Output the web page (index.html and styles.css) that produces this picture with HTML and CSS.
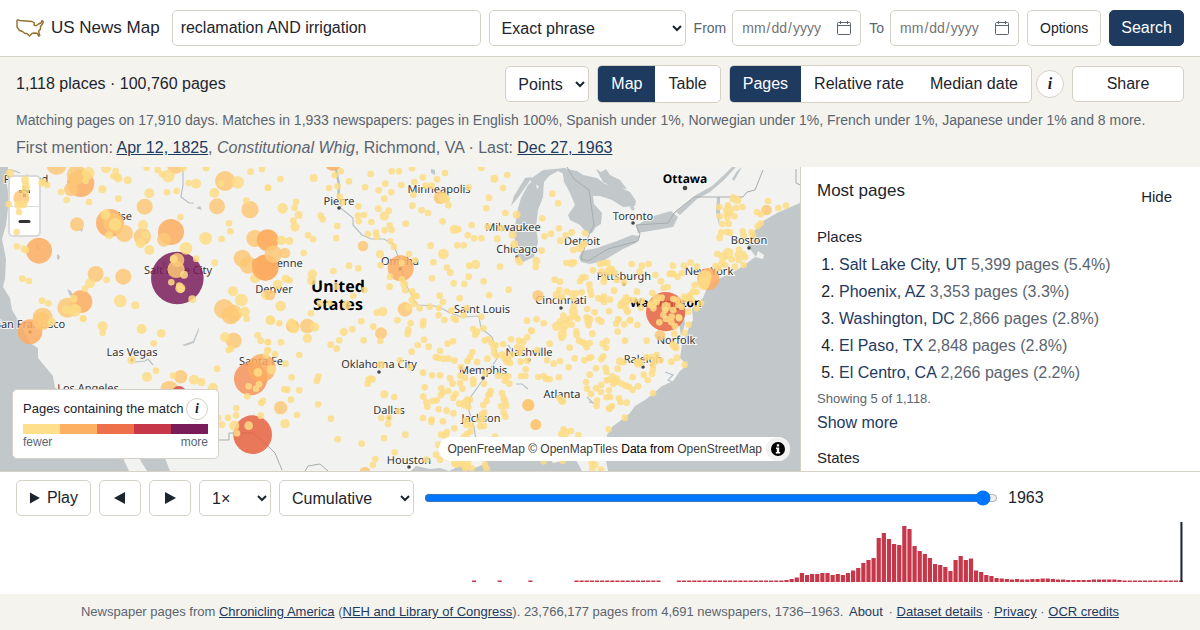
FILE: index.html
```html
<!DOCTYPE html>
<html lang="en">
<head>
<meta charset="utf-8">
<meta name="viewport" content="width=device-width, initial-scale=1">
<title>US News Map</title>
<link rel="stylesheet" href="styles.css">
</head>
<body>
<header class="topbar">
  <a class="brand" href="#">
    <svg class="brand-mark" viewBox="0 0 28 18" aria-hidden="true"><path d="M1 1.500 1.700.8 4 1.500 16 2.500 18.500 4 18 6 20 6.800 22.500 5 25 4 26 1.500 27.300 2.500 26.500 5 24.500 7.500 24.500 10 22.500 12.500 23.800 16.500 22.800 17 21 14.200 18 14 16 14.500 13.500 17 11 14.500 9 14.500 6.500 12.500 3.500 11.500 1 8Z" fill="none" stroke="#92702f" stroke-width="1.400" stroke-linejoin="round"/></svg>
    <span>US News Map</span>
  </a>
  <input class="field query" type="text" value="reclamation AND irrigation" aria-label="Search terms">
  <select class="field mode" aria-label="Match type"><option>Exact phrase</option></select>
  <label class="date-label">From <input class="field date" type="date"></label>
  <label class="date-label">To <input class="field date" type="date"></label>
  <button class="btn options" type="button">Options</button>
  <button class="btn primary" type="submit">Search</button>
</header>

<section class="summary">
  <div class="summary-row">
    <p class="totals">1,118 places · 100,760 pages</p>
    <select class="field points" aria-label="Map style"><option>Points</option></select>
    <div class="segmented">
      <button class="on" type="button">Map</button><button type="button">Table</button>
    </div>
    <div class="measure">
      <div class="segmented">
        <button class="on" type="button">Pages</button><button type="button">Relative rate</button><button type="button">Median date</button>
      </div>
      <button class="info" type="button" aria-label="About measures">i</button>
    </div>
    <button class="btn share" type="button">Share</button>
  </div>
  <p class="detail">Matching pages on 17,910 days. Matches in 1,933 newspapers: pages in English 100%, Spanish under 1%, Norwegian under 1%, French under 1%, Japanese under 1% and 8 more.</p>
  <p class="mentions">First mention: <a href="#">Apr 12, 1825</a>, <em>Constitutional Whig</em>, Richmond, VA · Last: <a href="#">Dec 27, 1963</a></p>
</section>

<main class="stage">
  <div class="map">
    <svg class="layer" viewBox="0 0 800 304" preserveAspectRatio="xMidYMid slice" role="img" aria-label="Base map of the United States">
      <rect width="800" height="304" fill="#c2c8ca"/>
      <path fill="#f2f3f1" d="M8 0 7 18 9 32 6 58 2 72 6 92 5 112 3 120 10 131 12 143 18 153 30 176 38 181 38 191 53 209 55 221 90 232 110 262 123 291 129 304 147 304 139 291 140 270 150 265 165 291 170 304 411 304 416 299 430 302 440 301 449 304 459 299 470 303 484 297 487 292 500 280 540 280 553 296 562 294 575 291 582 304 608 304 606 294 607 268 613 259 620 254 630 246 635 239 645 233 654 226 662 219 673 214 680 204 687 198 680 191 682 178 690 158 693 153 692 141 703 131 707 121 712 115 737 103 747 96 755 90 763 92 764 88 758 84 756 90 747 78 752 68 760 56 777 46 800 36 800 0Z"/>
      <g fill="#c2c8ca">
        <path d="M525 11 532 10 527 18 517 32 511 39 514 29Z"/>
        <path d="M528 18 535 11 537 22 544 14 543 30 538 43 536 60 538 75 534 90 523 95 516 85 514 65 518 41 521 31Z"/>
        <path d="M529 13 543 3 565 1 575 8 570 10 558 4 549 9 540 20Z"/>
        <path d="M562 1 577 4 583 8 597 11 605 17 617 19 630 25 636 34 635 39 623 40 612 33 600 29 593 29 594 37 602 46 601 57 596 60 592 66 587 66 580 58 570 53 568 48 575 38 570 26 564 15Z"/>
        <path d="M596 2 601 5 606 2 610 8 620 13 627 22 615 21 603 15Z"/>
        <path d="M579 90 582 84 597 81 617 74 632 68 640 69 636 76 623 82 603 94 590 97 581 95Z"/>
        <path d="M636 59 650 50 671 44 678 50 673 60 656 63 638 66Z"/>
        <path d="M676 45 696 28 712 19 724 8 732 0 736 0 723 14 710 25 697 32 680 48Z"/>
        <path d="M717 30 720 30 720 46 719 58 716 45ZM737 4 742 0 734 14 732 12Z"/>
        <path d="M632 37 635 42 632 44 630 40ZM583 75 587 74 586 79ZM431 2 435 3 435 8 431 6Z"/>
        <path d="M678 137 683 141 685 157 681 170 679 155Z"/>
        <path d="M36 76 38 79 40 84 37 82ZM57 87 60 89 59 93 57 92ZM67 122 71 124 73 128 70 129ZM79 62 83 61 82 65ZM196 41 200 39 202 43 198 42ZM162 95 166 94 167 102 163 100ZM182 178 193 174 199 160 199 163 194 176 185 179Z"/>
      </g>
      <g fill="none" stroke="#b6c0c6" stroke-width="1.200">
        <path d="M183 3 183 18 181 30 189 36 194 36M6 3 12 3 20 6"/>
        <path stroke-width="2.500" d="M336 2 339 18 338 34 341 40"/>
        <path d="M339 40 347 46 353 51 353 58 362 68 371 72 384 72 393 77 401 96 404 114 413 131 418 138 435 139 443 142 450 146 462 150 479 149"/>
        <path d="M479 150 481 161 492 170 498 190 489 204 482 214 470 231 469 244 474 260 477 281"/>
        <path d="M508 178 515 186M516 217 522 217 528 222M587 230 593 236 589 235M135 195 145 194 148 192 153 198"/>
        <path d="M665 205 673 208 668 213 672 215"/>
      </g>
      <g fill="none" stroke="#a9abac" stroke-width="1">
        <path d="M567 0 574 12 589 23 594 58 588 70 581 92 588 94 608 82 638 74 640 67 636 58 668 56 675 45 694 30 743 30 747 25 755 23 763 3M796 2 796 16 800 18"/>
        <path d="M218 273 229 273 229 266 253 266 268 279 275 286 282 303M305 304 308 299 320 297 328 304"/>
      </g>
      <g fill="#444"><circle cx="685" cy="21" r="2.300"/><circle cx="633" cy="56" r="1.800"/><circle cx="339" cy="41" r="1.800"/><circle cx="400" cy="102" r="1.800"/><circle cx="517" cy="90" r="1.800"/><circle cx="749" cy="81" r="1.800"/><circle cx="624" cy="117" r="1.800"/><circle cx="561" cy="141" r="1.800"/><circle cx="30" cy="165" r="1.800"/><circle cx="132" cy="193" r="1.800"/><circle cx="379" cy="205" r="1.800"/><circle cx="389" cy="251" r="1.800"/><circle cx="409" cy="300" r="1.800"/><circle cx="483" cy="211" r="1.800"/><circle cx="529" cy="193" r="1.800"/><circle cx="562" cy="234" r="1.800"/><circle cx="643" cy="200" r="1.800"/><circle cx="676" cy="181" r="1.800"/><circle cx="677" cy="142" r="2"/></g>
      <g class="places">
        <text x="26" y="16">Portland</text><text x="118" y="53">Boise</text><text x="178" y="107">Salt Lake City</text>
        <text x="277" y="100">Cheyenne</text><text x="274" y="126">Denver</text><text x="339" y="38">Pierre</text>
        <text x="439" y="26">Minneapolis</text><text x="513" y="64">Milwaukee</text><text x="517" y="86">Chicago</text>
        <text x="582" y="78">Detroit</text><text x="633" y="53">Toronto</text><text x="749" y="77">Boston</text>
        <text x="624" y="113">Pittsburgh</text><text x="709" y="108">New York</text><text x="561" y="137">Cincinnati</text>
        <text x="400" y="98">Omaha</text><text x="482" y="146">Saint Louis</text><text x="30" y="161">San Francisco</text>
        <text x="132" y="189">Las Vegas</text><text x="88" y="225">Los Angeles</text><text x="261" y="198">Santa Fe</text>
        <text x="379" y="201">Oklahoma City</text><text x="389" y="247">Dallas</text><text x="409" y="297">Houston</text>
        <text x="483" y="207">Memphis</text><text x="529" y="189">Nashville</text><text x="481" y="255">Jackson</text>
        <text x="562" y="231">Atlanta</text><text x="643" y="196">Raleigh</text><text x="676" y="177">Norfolk</text>
        <text class="capital" x="685" y="16">Ottawa</text><text class="capital" x="666" y="140">Washington</text>
        <text class="country" x="338" y="125">United</text><text class="country" x="338" y="143">States</text>
      </g>
    </svg>
    <div class="zoom">
      <button type="button" aria-label="Zoom in"><svg viewBox="0 0 29 29" aria-hidden="true"><path d="M14.500 9v11M9 14.500h11" stroke="#333" stroke-width="3"/></svg></button>
      <button type="button" aria-label="Zoom out"><svg viewBox="0 0 29 29" aria-hidden="true"><path d="M10 14.500h9" stroke="#333" stroke-width="3" stroke-linecap="round"/></svg></button>
    </div>
    <svg class="layer dots" id="dots" viewBox="0 0 800 304" preserveAspectRatio="xMidYMid slice" aria-hidden="true"></svg>
    <section class="legend">
      <div class="legend-head"><span>Pages containing the match</span><button class="info small" type="button" aria-label="About the colours">i</button></div>
      <div class="ramp"><i class="c1"></i><i class="c2"></i><i class="c3"></i><i class="c4"></i><i class="c5"></i></div>
      <div class="legend-ends"><span>fewer</span><span>more</span></div>
    </section>
    <div class="credit">
      <span><a href="#">OpenFreeMap</a> <a href="#">© OpenMapTiles</a> Data from <a href="#">OpenStreetMap</a></span>
      <button type="button" aria-label="Toggle attribution"><svg viewBox="0 0 24 24" aria-hidden="true"><circle cx="12" cy="12" r="7"/><path fill="#fff" d="M10.800 7.300h2.400v2.200h-2.400zM10 10.500h3.200v4.500h1v1.500h-4.400v-1.500h1v-3H10z"/></svg></button>
    </div>
  </div>
  <aside class="side">
    <div class="side-head"><h2>Most pages</h2><button class="plain" type="button">Hide</button></div>
    <h3>Places</h3>
    <ol>
      <li><a href="#">Salt Lake City, UT</a> <span>5,399 pages (5.4%)</span></li>
      <li><a href="#">Phoenix, AZ</a> <span>3,353 pages (3.3%)</span></li>
      <li><a href="#">Washington, DC</a> <span>2,866 pages (2.8%)</span></li>
      <li><a href="#">El Paso, TX</a> <span>2,848 pages (2.8%)</span></li>
      <li><a href="#">El Centro, CA</a> <span>2,266 pages (2.2%)</span></li>
    </ol>
    <p class="shown">Showing 5 of 1,118.</p>
    <button class="plain more" type="button">Show more</button>
    <h3>States</h3>
  </aside>
</main>

<section class="timeline">
  <div class="player">
    <button class="btn play" type="button"><svg viewBox="0 0 12 14" aria-hidden="true"><path d="M1 1v12l11-6z"/></svg>Play</button>
    <button class="btn step" type="button" aria-label="Previous year"><svg viewBox="0 0 12 14" aria-hidden="true"><path d="M11 1v12L0 7z"/></svg></button>
    <button class="btn step" type="button" aria-label="Next year"><svg viewBox="0 0 12 14" aria-hidden="true"><path d="M1 1v12l11-6z"/></svg></button>
    <select class="field speed" aria-label="Speed"><option>1×</option></select>
    <select class="field span" aria-label="Time span"><option>Cumulative</option></select>
    <input class="scrub" type="range" min="1736" max="1966" value="1963" aria-label="Year">
    <output class="year">1963</output>
  </div>
  <svg class="histogram" id="histogram" viewBox="0 0 228 60" preserveAspectRatio="none" role="img" aria-label="Matching pages per year"></svg>
</section>

<footer class="foot">Newspaper pages from <a href="#">Chronicling America</a> (<a href="#">NEH and Library of Congress</a>). 23,766,177 pages from 4,691 newspapers, 1736–1963. <button class="about" type="button">About</button> · <a href="#">Dataset details</a> · <a href="#">Privacy</a> · <a href="#">OCR credits</a></footer>
<script src="app.js"></script>
</body>
</html>
```
FILE: styles.css
```css
:root {
  --ink: #1c242d;
  --muted: #5b6570;
  --navy: #1e3a5f;
  --line: #d6d1c6;
  --paper: #f4f3ee;
}
* { box-sizing: border-box; }
body {
  margin: 0;
  height: 100vh;
  display: flex;
  flex-direction: column;
  font: 16px/22px "Liberation Sans", Arial, sans-serif;
  color: var(--ink);
  background: #fff;
}
p, h2, h3, ol { margin: 0; font-weight: 400; }
a { color: var(--navy); }
button, input, select { font: inherit; color: inherit; }
button { cursor: pointer; }

.topbar {
  display: flex;
  align-items: center;
  gap: 8px;
  padding: 10px 16px;
  border-bottom: 1px solid var(--line);
}
.brand {
  display: flex;
  align-items: center;
  gap: 7px;
  margin-right: 4px;
  font-size: 17px;
  color: var(--ink);
  text-decoration: none;
  white-space: nowrap;
}
.brand-mark { width: 28px; height: 18px; }
.field, .btn {
  height: 36px;
  border: 1px solid var(--line);
  border-radius: 5px;
  background: #fff;
}
.field { padding: 0 8px; }
.btn { padding: 0 12px; }
.query { flex: 1; min-width: 0; }
.mode { flex: 0 0 197px; }
.date-label {
  display: flex;
  align-items: center;
  gap: 6px;
  font-size: 14px;
  color: var(--muted);
}
.date { width: 129px; color: #757575; }
.date::-webkit-calendar-picker-indicator {
  width: 16px;
  height: 16px;
  padding: 0;
  background: url("data:image/svg+xml,%3Csvg xmlns='http://www.w3.org/2000/svg' viewBox='0 0 16 16' fill='none' stroke='%235b6570'%3E%3Crect x='1.5' y='2.500' width='13' height='12' rx='1'/%3E%3Cpath d='M1.5 5.500h13M4.500 1v3M11.500 1v3'/%3E%3C/svg%3E") center / 16px 16px no-repeat;
}
.options { font-size: 14px; }
.btn.primary { padding: 0 11px; background: var(--navy); border-color: var(--navy); color: #fff; }

.summary { padding: 8px 16px; background: var(--paper); }
.summary-row { display: flex; align-items: center; gap: 8px; }
.totals { flex: 1; }
.points { width: 84px; }
.segmented {
  display: flex;
  height: 38px;
  border: 1px solid var(--line);
  border-radius: 5px;
  overflow: hidden;
  background: #fff;
}
.segmented button { border: 0; padding: 0 13px; background: none; }
.segmented .on { background: var(--navy); color: #fff; }
.measure { display: flex; align-items: center; gap: 4px; }
.info {
  width: 28px;
  height: 28px;
  padding: 0;
  border: 1px solid var(--line);
  border-radius: 50%;
  background: #fff;
  font: italic bold 16px/24px "Liberation Serif", serif;
}
.info.small { width: 22px; height: 22px; font-size: 14px; line-height: 18px; }
.share { width: 112px; }
.detail, .mentions { margin-top: 6px; color: var(--muted); }
.detail { font-size: 14px; }

.stage {
  flex: 1;
  min-height: 0;
  display: grid;
  grid-template-columns: 2fr 1fr;
  grid-template-rows: minmax(0, 1fr);
  border-bottom: 1px solid var(--line);
}
.map { position: relative; min-width: 0; overflow: hidden; background: #c2c8ca; }
.layer { position: absolute; inset: 0; width: 100%; height: 100%; }
.dots { pointer-events: none; }
.places text {
  font: 11px "Noto Sans", "Open Sans", sans-serif;
  text-rendering: geometricPrecision;
  text-anchor: middle;
  fill: #333;
  stroke: #f7f7f6;
  stroke-width: 2px;
  paint-order: stroke;
}
.places .capital { font-size: 12px; font-weight: 700; fill: #000; }
.places .country { font-size: 16px; font-weight: 700; fill: #000; }
.zoom {
  position: absolute;
  left: 8px;
  top: 8px;
  border: 2px solid #d9dad9;
  border-radius: 5px;
  background: #fff;
  overflow: hidden;
}
.zoom button { display: block; width: 29px; height: 29px; padding: 0; border: 0; background: none; }
.zoom svg { display: block; }
.zoom button + button { border-top: 1px solid #ddd; }
.legend {
  position: absolute;
  left: 12px;
  bottom: 12px;
  width: 207px;
  padding: 8px 10px;
  border: 1px solid var(--line);
  border-radius: 5px;
  background: #fff;
  font-size: 13px;
}
.legend-head { display: flex; align-items: center; justify-content: space-between; margin-bottom: 4px; white-space: nowrap; }
.ramp { display: grid; grid-template-columns: repeat(5, 1fr); height: 10px; }
.c1 { background: #fddf8c; }
.c2 { background: #fdb062; }
.c3 { background: #ed704a; }
.c4 { background: #c6374a; }
.c5 { background: #7a1c5a; }
.legend-ends { display: flex; justify-content: space-between; font-size: 12px; line-height: 16px; color: var(--muted); }
.credit {
  position: absolute;
  right: 10px;
  bottom: 10px;
  display: flex;
  align-items: center;
  gap: 4px;
  padding-left: 8px;
  border-radius: 12px;
  background: #fff;
  font-size: 12px;
  line-height: 24px;
  color: #000;
}
.credit a { color: #404040; text-decoration: none; }
.credit button { width: 24px; height: 24px; padding: 0; border: 0; border-radius: 50%; background: #f2f2f2; }
.credit svg { display: block; }

.side { min-width: 0; padding: 12px 16px; border-left: 1px solid var(--line); overflow: hidden; }
.side-head { display: flex; justify-content: space-between; height: 46px; }
.side h2 { font-size: 17px; line-height: 24px; }
.side h3 { font-size: 15px; line-height: 24px; }
.plain { border: 0; padding: 0; background: none; }
.side-head .plain { align-self: flex-start; height: 36px; padding: 0 12px; font-size: 15px; }
.side ol { padding-left: 22px; margin-top: 2px; }
.side li { line-height: 27px; }
.side li a { text-decoration: none; }
.side li span, .shown { color: var(--muted); }
.shown { font-size: 13px; line-height: 26px; }
.more { display: block; color: var(--navy); margin-bottom: 12px; }

.timeline { padding: 8px 16px 12px; }
.player { display: flex; align-items: center; gap: 8px; margin-bottom: 6px; }
.player svg { width: 12px; height: 14px; fill: var(--ink); }
.play { display: flex; align-items: center; gap: 7px; width: 75px; }
.step { display: grid; place-items: center; width: 42px; }
.speed { width: 72px; }
.span { width: 135px; }
.scrub { flex: 1; margin: 0 2px; }
.year { width: 176px; }
.histogram { display: block; width: 100%; height: 60px; }

.foot {
  padding: 7px 16px;
  background: var(--paper);
  color: var(--muted);
  font-size: 13px;
  text-align: center;
}
.about { border: 0; padding: 0 2px; background: none; color: var(--navy); }
```
FILE: app.js
```js
const NS = "http://www.w3.org/2000/svg";
const COLORS = { a: "#fddc85", b: "#fdc877", c: "#fdab60", d: "#f7925a", e: "#e8603f", f: "#7a1c5a", g: "#d64646" };

// Each tile covers part of the map; its points are in thirds of a map unit.
const TILES = [
  { x: 0, y: -2, groups: [
    ["f", 79, "532,339"],
    ["c", 42, "330,174"],
    ["c", 41, "242,55"],
    ["c", 39, "513,201 117,257 797,308"],
    ["c", 34, "243,410"],
    ["b", 30, "340,174 230,30 170,0 675,48 202,428 128,458 672,432 803,225"],
    ["b", 26, "528,313 427,215 527,0 373,205 750,134 745,300 765,220 727,280 700,445"],
    ["b", 24, "434,125 651,124 370,335 64,99 287,327"],
    ["b", 21, "231,178 492,224 532,285 213,73"],
    ["a", 19, "713,52 617,220 558,250 361,408 724,405 345,178 505,33 265,25 225,436"],
    ["a", 15, "643,84 448,255 699,379 588,56 422,235 316,150 429,180 270,355 318,10 541,370 735,440 708,442 798,390 448,85 765,340"],
    ["a", 12, "75,45 78,62 77,75 55,120 70,118 307,73 406,421 350,35 355,40 383,46 436,210 319,145 552,329 521,282 198,434 221,401 30,24 577,403 327,211"],
    ["a", 10, "26,118 57,141 50,201 51,244 71,251 78,256 183,81 200,105 257,47 267,111 355,101 125,55 142,60 340,33 347,18 541,156 501,82 530,78 566,54 663,55 752,20 786,12 804,68 739,107 687,175 691,199 665,222 589,281 644,293 67,341 87,348 320,345 255,371 126,407 145,415 249,460 514,352 538,362 543,373 486,28 440,8 473,15 130,50 618,10 550,10"]
  ] },
  { x: 0, y: 151, groups: [
    ["e", 58, "758,350"],
    ["d", 50, "752,182"],
    ["c", 42, "785,150"],
    ["c", 37, "90,41"],
    ["b", 27, "125,10 692,-8 508,215"],
    ["b", 24, "701,68"],
    ["g", 22, "537,226"],
    ["b", 20, "542,176"],
    ["a", 15, "675,58 308,25 425,33 582,185 639,210 441,177 703,323"],
    ["a", 13, "395,126 604,192 484,46 774,163 746,323 155,12"],
    ["a", 10, "308,44 461,76 468,158 519,173 651,152 686,96 693,92 773,52 782,68 803,72 798,112 742,235 746,205 768,212 777,199 789,249 784,255 709,271 684,299 708,292 666,320 782,293 711,346 250,3 655,300 740,2 802,96"]
  ] },
  { x: 265, y: -2, groups: [
    ["c", 39, "407,310 0,308"],
    ["c", 25, "204,-7"],
    ["c", 33, "8,226"],
    ["b", 26, "25,267"],
    ["b", 22, "420,433"],
    ["b", 19, "525,98"],
    ["b", 16, "60,264 294,243 15,390"],
    ["a", 16, "47,423 53,130 536,98 535,267"],
    ["a", 14, "49,226 142,327 140,347 90,186 632,298 353,440 358,153 38,358 245,420 568,193 15,465"],
    ["a", 12, "146,39 73,228 62,341 101,150 688,41 743,209 748,238 755,149 345,267 430,427 418,358"],
    ["a", 10, "9,69 46,42 93,111 89,129 85,167 167,152 173,163 217,183 214,219 129,211 144,223 116,264 74,346 205,318 252,302 280,310 298,375 265,393 138,445 252,49 227,19 209,31 218,64 192,69 224,95 232,112 280,124 279,152 297,150 281,169 317,27 300,67 341,76 361,56 379,82 358,101 380,19 402,19 409,60 441,10 448,51 474,37 516,43 540,24 482,62 500,62 445,89 442,122 470,136 489,144 550,121 611,67 649,9 727,30 714,69 672,98 664,130 721,144 340,131 371,137 319,171 374,181 380,195 359,196 422,176 333,203 335,215 309,207 376,229 387,245 580,193 533,169 620,180 608,211 627,220 649,220 697,221 577,241 596,241 710,190 668,185 497,242 347,301 432,267 450,286 505,292 375,335 374,365 411,343 421,376 441,379 447,392 455,393 440,405 449,417 464,430 501,340 546,308 556,323 613,302 611,335 566,355 598,357 656,349 705,305 731,374 672,391 584,400 524,392 534,411 494,425 522,429 559,437 606,429 521,451 596,451 649,455 759,284 764,292 545,104 165,415 193,415 213,365 335,443 410,293"]
  ] },
  { x: 265, y: 151, groups: [
    ["b", 22, "127,24"],
    ["b", 20, "83,25 47,269"],
    ["b", 18, "348,46 790,261"],
    ["b", 16, "300,462 812,320"],
    ["a", 14, "79,15 149,27 60,317 127,61 20,155 88,32 17,7"],
    ["a", 12, "358,229 347,140 236,42"],
    ["a", 10, "43,16 9,73 48,73 9,97 30,109 61,137 103,111 80,178 160,176 156,188 58,214 67,215 103,217 78,245 159,259 96,291 198,302 218,364 290,377 197,80 223,67 215,92 262,34 289,10 325,26 346,69 296,67 397,7 437,15 430,35 428,47 475,10 474,22 477,65 458,81 491,86 440,101 525,99 512,117 520,120 535,122 550,122 568,128 548,77 564,70 538,6 566,0 573,6 625,33 636,41 631,50 655,31 659,67 671,64 680,75 692,82 667,122 686,90 687,105 715,78 738,64 762,68 757,87 775,71 787,58 799,38 786,8 622,102 607,129 615,118 636,132 588,147 405,127 435,148 323,184 317,182 308,197 311,185 388,237 400,280 372,299 349,300 369,318 357,360 421,350 389,403 331,423 324,441 484,425 474,164 501,172 525,172 555,181 563,197 585,195 592,212 587,173 600,180 625,185 625,197 657,197 660,165 479,208 475,236 484,253 487,266 502,249 515,247 529,211 534,223 527,232 550,219 572,228 565,239 583,257 598,262 606,245 615,245 600,252 521,274 545,278 474,300 500,305 499,311 534,310 568,331 565,286 610,267 655,261 665,249 677,219 674,229 670,232 711,225 716,240 720,249 709,265 724,263 716,283 721,296 658,284 650,290 655,303 645,306 657,324 645,325 604,320 603,307 618,322 606,348 617,340 546,342 528,350 542,353 597,356 690,356 520,380 535,378 513,410 525,425 550,420 568,437 576,440 590,435 600,450 610,437 620,451 665,452 660,440 605,445 595,440 548,416 700,173 718,175 733,197 730,175 767,131 720,188 725,131 730,125 712,110 717,120 735,135 781,174 768,174 782,154 740,110 695,113 770,90 764,105 787,128 657,385 665,387"]
  ] },
  { x: 530, y: -2, groups: [
    ["e", 59, "407,440"],
    ["c", 33, "535,342"],
    ["b", 17, "24,392"],
    ["b", 16, "710,135"],
    ["a", 20, "525,335 520,355"],
    ["a", 16, "594,264 595,135"],
    ["a", 14, "580,275 240,315 368,417 285,410 130,440 380,400 408,425"],
    ["a", 12, "19,287 610,100 622,106 125,295 150,250 80,390 235,320"],
    ["a", 10, "67,86 84,115 37,160 87,190 63,206 44,214 125,202 107,211 91,227 165,205 165,235 130,255 158,240 35,257 17,305 109,294 132,292 594,121 568,126 618,129 637,126 591,146 598,145 569,154 592,158 613,154 577,177 596,176 574,202 591,201 600,203 569,218 638,199 641,211 669,210 665,202 683,184 692,175 681,141 693,148 714,108 745,129 768,122 627,254 562,267 640,268 645,277 623,270 605,283 615,305 641,300 585,300 575,295 557,303 565,310 627,285 305,297 336,302 356,297 329,320 376,330 393,349 401,369 413,366 321,380 367,384 210,297 220,295 232,293 189,316 214,320 222,340 255,325 246,313 221,350 260,345 282,352 74,344 90,350 88,375 156,338 166,337 150,349 178,359 181,376 184,390 205,400 252,377 216,402 222,411 240,404 222,395 138,385 155,382 125,385 110,380 95,395 131,423 130,400 172,432 194,442 237,439 100,452 120,460 135,455 205,464 265,463 300,465 170,457 288,397 300,405 313,405 285,425 290,435 275,415 272,422 293,440 335,408 333,429 429,302 462,302 482,293 500,305 430,327 443,335 456,324 425,325 419,327 494,360 490,380 480,390 500,381 470,400 478,395 462,395 485,405 513,415 500,430 475,440 446,457 461,405 455,425 430,435 425,455 400,450 405,435 380,410 360,420 370,430 395,398 441,405 445,420 430,402"]
  ] },
  { x: 530, y: 151, groups: [
    ["b", 16, "18,320 390,52"],
    ["b", 18, "-5,262"],
    ["a", 14, "105,20 97,50 80,25 105,345 325,135"],
    ["a", 12, "434,85 175,10 375,128 270,130 97,249"],
    ["a", 10, "41,16 5,39 20,4 59,77 22,96 119,89 134,121 116,148 71,137 51,127 90,129 25,177 41,174 48,182 59,184 87,178 125,20 100,35 110,5 90,10 95,60 139,40 140,51 147,68 158,73 165,77 179,75 170,88 187,47 176,22 180,3 214,11 143,2 259,17 263,41 283,19 265,5 300,7 322,21 218,77 230,69 228,89 285,68 350,68 280,133 220,115 214,124 163,127 183,118 178,120 198,151 227,150 230,162 263,152 247,175 237,185 253,190 260,182 262,191 275,197 287,203 297,207 250,198 308,215 324,205 308,177 353,186 341,170 366,167 369,153 392,127 380,111 365,117 369,140 424,131 441,119 464,140 320,133 349,118 333,135 179,170 168,192 171,212 183,228 198,211 213,222 214,201 237,217 230,238 240,237 267,241 271,252 290,254 201,248 200,264 246,264 239,272 237,271 369,226 285,299 236,334 145,351 123,339 101,334 94,348 88,240 94,246 230,187 476,20 464,45 433,47 448,1 428,80 438,90 408,3 388,13 424,13 435,25 41,430 98,428 185,435 195,440 187,452 213,455"]
  ] }
];

const dots = document.getElementById("dots");
for (const tile of TILES) {
  const g = document.createElementNS(NS, "g");
  g.setAttribute("transform", `translate(${tile.x} ${tile.y}) scale(${1 / 3})`);
  for (const [color, radius, list] of tile.groups) {
    for (const pair of list.split(" ")) {
      const [cx, cy] = pair.split(",");
      const dot = document.createElementNS(NS, "circle");
      dot.setAttribute("cx", cx);
      dot.setAttribute("cy", cy);
      dot.setAttribute("r", radius);
      dot.setAttribute("fill", COLORS[color]);
      dot.setAttribute("fill-opacity", 0.85);
      g.append(dot);
    }
  }
  dots.append(g);
}

// Bar heights by year offset from 1736.
const heights = new Array(228).fill(0);
for (const i of [89, 94, 100]) heights[i] = 1.5;
for (let i = 109; i < 126; i++) heights[i] = 1.5;
for (let i = 129; i < 228; i++) heights[i] = 1.5;
const peak = [2, 3, 4.5, 9, 7, 8, 8, 9, 9, 7, 8, 7, 9, 11.5, 14, 19, 22, 24, 44, 49, 43, 38, 37, 56, 53, 36, 31, 28, 24, 18, 17, 15, 11, 22, 26, 22, 23.5, 11.5, 10, 7, 6, 4, 3.5, 3, 2.5, 3, 2.5, 2.5, 3, 3, 3.5, 3.5, 3, 2.5, 2.5, 2, 2, 2, 2, 2, 2.5, 2.5, 2.5, 2.5, 2.5, 2];
peak.forEach((h, i) => { heights[150 + i] = h; });

const histogram = document.getElementById("histogram");
function bar(x, width, height, fill) {
  const r = document.createElementNS(NS, "rect");
  r.setAttribute("x", x);
  r.setAttribute("y", 60 - height);
  r.setAttribute("width", width);
  r.setAttribute("height", height);
  r.setAttribute("fill", fill);
  histogram.append(r);
}
heights.forEach((h, i) => { if (h) bar(i, 0.82, h, "#c6374a"); });
bar(227.3, 0.4, 60, "#1c242d");
```
